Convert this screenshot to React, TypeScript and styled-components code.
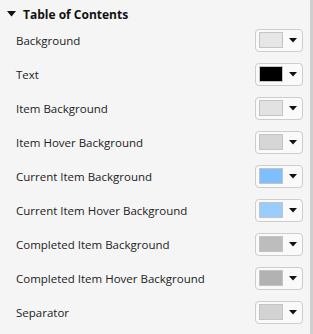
import React from "react";
import styled, { createGlobalStyle } from "styled-components";

const Global = createGlobalStyle`
  html, body { margin: 0; padding: 0; background: #f5f5f5; }
  body { font-family: "Open Sans", "Noto Sans", sans-serif; }
  * { box-sizing: border-box; }
`;

const Panel = styled.div`
  width: 313px;
  height: 334px;
  display: flex;
  background: #f5f5f5;
  overflow: hidden;
`;

const Content = styled.div`
  flex: 1;
  display: flex;
  flex-direction: column;
`;

const Scrollbar = styled.div`
  width: 3px;
  background: #cfcfcf;
`;

const Header = styled.div`
  height: 24px;
  padding-top: 4px;
  display: flex;
  align-items: center;
  gap: 7px;
  padding-left: 7px;
  font-size: 12px;
  font-weight: 700;
  color: #111;
`;

const Row = styled.div`
  height: 34px;
  display: flex;
  align-items: center;
  justify-content: space-between;
  padding: 0 7px 2px 16px;
`;

const Label = styled.span`
  font-size: 11.5px;
  color: #222;
`;

const ColorButton = styled.div`
  width: 48px;
  height: 23px;
  border: 1px solid #cdcdcd;
  border-radius: 4px;
  background: #fafafa;
  display: flex;
  align-items: center;
  padding-left: 3px;
  gap: 6px;
`;

const Swatch = styled.div<{ $c: string }>`
  width: 24px;
  height: 16px;
  border: 1px solid #c4c4c4;
  background: ${(p) => p.$c};
`;

const Arrow = () => (
  <svg width="8" height="5" viewBox="0 0 8 5">
    <path d="M0 0 H8 L4 4.5 Z" fill="#111" />
  </svg>
);

const rows: [string, string][] = [
  ["Background", "#e6e6e6"],
  ["Text", "#000000"],
  ["Item Background", "#e2e2e2"],
  ["Item Hover Background", "#d6d6d6"],
  ["Current Item Background", "#80bfff"],
  ["Current Item Hover Background", "#99ccff"],
  ["Completed Item Background", "#bdbdbd"],
  ["Completed Item Hover Background", "#b2b2b2"],
  ["Separator", "#d3d3d3"],
];

export default function App() {
  return (
    <>
      <Global />
      <Panel>
        <Content>
          <Header>
            <svg width="9" height="6" viewBox="0 0 9 6">
              <path d="M0 0 H9 L4.5 5.5 Z" fill="#111" />
            </svg>
            <span>Table of Contents</span>
          </Header>
          {rows.map(([l, c]) => (
            <Row key={l}>
              <Label>{l}</Label>
              <ColorButton>
                <Swatch $c={c} />
                <Arrow />
              </ColorButton>
            </Row>
          ))}
        </Content>
        <Scrollbar />
      </Panel>
    </>
  );
}
